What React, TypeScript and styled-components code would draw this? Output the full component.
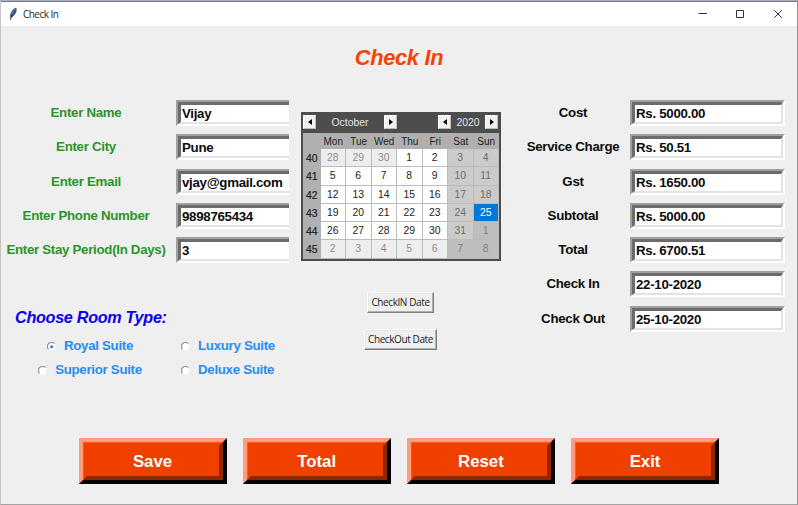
import React, { useState } from "react";
import styled, { createGlobalStyle } from "styled-components";

const Global = createGlobalStyle`
  * { box-sizing: border-box; }
  body { margin: 0; background: #efefef; overflow: hidden; }
`;

const Window = styled.div`
  width: 798px;
  height: 505px;
  display: flex;
  flex-direction: column;
  background: #efefef;
  border: 1px solid #a3a3a3;
  border-top-color: #a9afba;
  border-left-color: #c3c3c6;
  border-right-color: #8d8f96;
  font-family: "Liberation Sans", Arial, sans-serif;
  font-weight: bold;
  font-size: 13.3px;
  letter-spacing: -0.3px;
  line-height: 16px;
  color: #0c0c0c;
  white-space: nowrap;
`;

const TitleBar = styled.header`
  height: 25px;
  flex: none;
  display: flex;
  align-items: center;
  background: #fff;
  border-top: 1px solid #6f788b;
  padding: 0 14px 0 7px;
  font: 10px/14px "Open Sans", "Noto Sans", sans-serif;
  color: #262626;
`;

const TitleText = styled.span`
  flex: 1;
  padding-left: 5px;
  letter-spacing: -0.55px;
`;

const Controls = styled.div`
  display: flex;
  gap: 28px;
`;

const Heading = styled.h1`
  margin: 18px 0 0;
  height: 28px;
  text-align: center;
  font: italic bold 21.8px/28px "Liberation Sans", Arial, sans-serif;
  color: #f24405;
`;

const Columns = styled.main`
  display: grid;
  grid-template-columns: 288px 223px 1fr;
  height: 366px;
  padding-top: 28px;
`;

const Form = styled.div<{ $labels: number; $rows: number }>`
  display: grid;
  grid-template-columns: ${(p) => p.$labels}px 1fr;
  grid-template-rows: repeat(${(p) => p.$rows}, 34.3px);
`;

const Label = styled.label<{ $guest?: boolean }>`
  text-align: center;
  line-height: 26px;
  color: ${(p) => (p.$guest ? "#2b942b" : "#0c0c0c")};
  padding: ${(p) => (p.$guest ? "0 5px 0 0" : "0 0 0 4px")};
`;

const Entry = styled.div<{ $clipped?: boolean }>`
  width: ${(p) => (p.$clipped ? "auto" : "155px")};
  height: 26px;
  border: 2px solid;
  border-color: #a0a0a0 #fff #fff #a0a0a0;
  ${(p) => p.$clipped && "border-right: 0;"}
`;

const EntryInner = styled.div<{ $clipped?: boolean }>`
  height: 22px;
  background: #fff;
  border: solid;
  border-width: 3px 2px 2px 3px;
  border-color: #6b6b6b #e3e3e3 #e3e3e3 #6b6b6b;
  ${(p) => p.$clipped && "border-right: 0;"}
  padding-left: 1px;
  line-height: 17px;
`;

const RoomTitle = styled.h2`
  margin: 35px 0 0 14px;
  font: italic bold 16.2px/22px "Liberation Sans", Arial, sans-serif;
  color: #0a00f0;
`;

const Rooms = styled.div`
  display: grid;
  grid-template-columns: 178px 110px;
  grid-template-rows: 24px 24px;
  margin-top: 6px;
`;

const Room = styled.button<{ $center?: boolean }>`
  display: flex;
  align-items: center;
  justify-content: ${(p) => (p.$center ? "center" : "flex-start")};
  gap: 8px;
  border: 0;
  padding: 0 0 0 ${(p) => (p.$center ? 0 : 2)}px;
  background: none;
  font: bold 13.3px/16px "Liberation Sans", Arial, sans-serif;
  letter-spacing: -0.3px;
  color: #2a8cee;
`;

const Middle = styled.div`
  display: flex;
  flex-direction: column;
  align-items: center;
  padding: 12px 0 0 1px;
`;

const Calendar = styled.section`
  width: 200px;
  height: 149px;
  border: 2px solid #4d4d4d;
  border-top-width: 0;
  background: #b0b0b0;
  font-weight: normal;
  font-size: 10.4px;
  letter-spacing: 0;
  line-height: 17px;
  color: #222;
`;

const CalendarHead = styled.div`
  display: grid;
  grid-template-columns: 13px 68px 13px 41px 13px 34px 13px;
  align-items: center;
  height: 21px;
  padding-bottom: 1px;
  background: #4d4d4d;
  color: #e6e6e6;
  text-align: center;
`;

const Arrow = styled.button`
  display: flex;
  align-items: center;
  justify-content: center;
  width: 13px;
  height: 14px;
  padding: 0;
  border: 1px solid #fff;
  border-right-color: #bdbdbd;
  border-bottom-color: #bdbdbd;
  background: #f1f1f1;
`;

const Days = styled.div`
  display: grid;
  grid-template-columns: 17.5px repeat(7, 25.5px);
  grid-template-rows: 16px repeat(6, 18.3px);
  text-align: center;
`;

const DayName = styled.span`
  font-size: 10px;
`;

const Week = styled.span`
  padding-top: 1px;
  -webkit-text-stroke: 0.2px #222;
`;

type Kind = "day" | "other" | "weekend" | "otherWeekend" | "selected";
const kinds: Record<Kind, [string, string]> = {
  day: ["#fff", "#222"],
  other: ["#ededed", "#8d8d8d"],
  weekend: ["#cbcbcb", "#6b6b6b"],
  otherWeekend: ["#bebebe", "#7d7d7d"],
  selected: ["#0078d7", "#fff"],
};

const Day = styled.span<{ $kind: Kind }>`
  border-right: 1px solid #bcbcbc;
  border-bottom: 1px solid #bcbcbc;
  background: ${(p) => kinds[p.$kind][0]};
  color: ${(p) => kinds[p.$kind][1]};
`;

const DateButton = styled.button<{ $width: number; $top: number }>`
  width: ${(p) => p.$width}px;
  height: 21px;
  margin-top: ${(p) => p.$top}px;
  margin-right: 1px;
  padding: 0;
  border: 1px solid;
  border-color: #fff #7c7c7c #7c7c7c #fff;
  box-shadow: inset -1px -1px #b0b0b0, inset 1px 1px #e6e6e6;
  background: #efefef;
  font: 10px/17px "Open Sans", "Noto Sans", sans-serif;
  letter-spacing: -0.4px;
  color: #222;
`;

const Actions = styled.footer`
  display: grid;
  grid-template-columns: repeat(4, 148px);
  column-gap: 16.2px;
  padding-left: 77.5px;
`;

const Action = styled.button`
  height: 46px;
  padding: 0;
  border: 4px solid;
  border-color: #ff9c7c #050000 #050000 #ff9c7c;
  background: #f04000;
  box-shadow: inset 1px 1px #f5581f;
`;

const ActionFace = styled.span`
  display: block;
  height: 38px;
  border: 4px solid;
  border-color: transparent #902600 #902600 transparent;
  font: bold 16.8px/31px "Liberation Sans", Arial, sans-serif;
  color: #fff;
`;

function Feather() {
  return (
    <svg width="10" height="14" viewBox="0 0 10 14">
      <path d="M8.2.5C5 1.4 2 5 1.9 10.6L3.6 10.4C7.6 8 9.6 3.6 8.2.5Z" fill="#33567f" />
      <path d="M7.4 1.7C4.8 4 3.2 7 2.9 10" stroke="#86abd0" strokeWidth=".9" fill="none" />
      <path d="M4 7 2.4 12.9" stroke="#222b36" strokeWidth=".9" />
    </svg>
  );
}

function Triangle({ right }: { right?: boolean }) {
  return (
    <svg width="4" height="6" viewBox="0 0 4 6">
      <path d={right ? "M0 0 4 3 0 6Z" : "M4 0 0 3 4 6Z"} fill="#000" />
    </svg>
  );
}

function RadioMark({ on }: { on: boolean }) {
  return (
    <svg width="9" height="9" viewBox="0 0 9 9">
      <circle cx="4.5" cy="4.5" r="3.9" fill="#fff" />
      <path d="M1.6 7.4A4 4 0 0 1 7.4 1.6" fill="none" stroke="#858585" strokeWidth="1.1" />
      {on && <circle cx="4.7" cy="4.7" r="1.5" fill="#2482e0" />}
    </svg>
  );
}

const guest = [
  ["Enter Name", "Vijay"],
  ["Enter City", "Pune"],
  ["Enter Email", "vjay@gmail.com"],
  ["Enter Phone Number", "9898765434"],
  ["Enter Stay Period(In Days)", "3"],
];

const bill = [
  ["Cost", "Rs. 5000.00"],
  ["Service Charge", "Rs. 50.51"],
  ["Gst", "Rs. 1650.00"],
  ["Subtotal", "Rs. 5000.00"],
  ["Total", "Rs. 6700.51"],
  ["Check In", "22-10-2020"],
  ["Check Out", "25-10-2020"],
];

const rooms = ["Royal Suite", "Luxury Suite", "Superior Suite", "Deluxe Suite"];
const dayNames = ["Mon", "Tue", "Wed", "Thu", "Fri", "Sat", "Sun"];

// October 2020 starts on a Thursday; the grid opens on Monday 28 September.
function dayAt(index: number): { text: number; kind: Kind } {
  const n = index - 2;
  const weekend = index % 7 > 4;
  if (n < 1) return { text: n + 30, kind: "other" };
  if (n > 31) return { text: n - 31, kind: weekend ? "otherWeekend" : "other" };
  if (n === 25) return { text: n, kind: "selected" };
  return { text: n, kind: weekend ? "weekend" : "day" };
}

export default function App() {
  const [room, setRoom] = useState("Royal Suite");
  return (
    <>
      <Global />
      <Window>
        <TitleBar>
          <Feather />
          <TitleText>Check In</TitleText>
          <Controls>
            <svg width="10" height="10" viewBox="0 0 10 10" stroke="#333">
              <path d="M1.5 4.5H10" />
            </svg>
            <svg width="10" height="10" viewBox="0 0 10 10" stroke="#333" fill="none">
              <path d="M1.5 1.5H8.5V8.5H1.5Z" />
            </svg>
            <svg width="10" height="10" viewBox="0 0 10 10" stroke="#333">
              <path d="M1.2 1.2 8.8 8.8M8.8 1.2 1.2 8.8" />
            </svg>
          </Controls>
        </TitleBar>
        <Heading>Check In</Heading>
        <Columns>
          <div>
            <Form $labels={175} $rows={5}>
              {guest.map(([name, value]) => (
                <React.Fragment key={name}>
                  <Label $guest>{name}</Label>
                  <Entry $clipped>
                    <EntryInner $clipped>{value}</EntryInner>
                  </Entry>
                </React.Fragment>
              ))}
            </Form>
            <RoomTitle>Choose Room Type:</RoomTitle>
            <Rooms>
              {rooms.map((name, i) => (
                <Room key={name} $center={i % 2 === 0} onClick={() => setRoom(name)}>
                  <RadioMark on={room === name} />
                  {name}
                </Room>
              ))}
            </Rooms>
          </div>
          <Middle>
            <Calendar>
              <CalendarHead>
                <Arrow><Triangle /></Arrow>
                <span>October</span>
                <Arrow><Triangle right /></Arrow>
                <span />
                <Arrow><Triangle /></Arrow>
                <span>2020</span>
                <Arrow><Triangle right /></Arrow>
              </CalendarHead>
              <Days>
                <span />
                {dayNames.map((d) => (
                  <DayName key={d}>{d}</DayName>
                ))}
                {[40, 41, 42, 43, 44, 45].map((week, row) => (
                  <React.Fragment key={week}>
                    <Week>{week}</Week>
                    {dayNames.map((d, col) => {
                      const { text, kind } = dayAt(row * 7 + col);
                      return <Day key={d} $kind={kind}>{text}</Day>;
                    })}
                  </React.Fragment>
                ))}
              </Days>
            </Calendar>
            <DateButton $width={67} $top={31}>CheckIN Date</DateButton>
            <DateButton $width={73} $top={16}>CheckOut Date</DateButton>
          </Middle>
          <Form $labels={118} $rows={7}>
            {bill.map(([name, value]) => (
              <React.Fragment key={name}>
                <Label>{name}</Label>
                <Entry>
                  <EntryInner>{value}</EntryInner>
                </Entry>
              </React.Fragment>
            ))}
          </Form>
        </Columns>
        <Actions>
          {["Save", "Total", "Reset", "Exit"].map((name) => (
            <Action key={name}>
              <ActionFace>{name}</ActionFace>
            </Action>
          ))}
        </Actions>
      </Window>
    </>
  );
}
